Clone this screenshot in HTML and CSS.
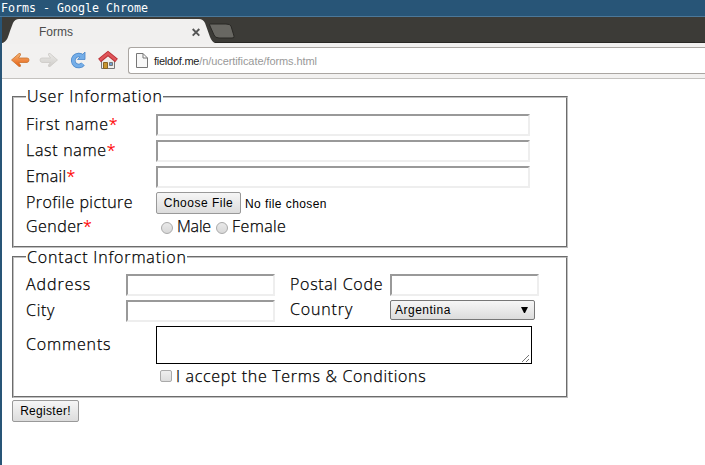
FILE: index.html
```
<!DOCTYPE html>
<html lang="en">
<head>
<meta charset="utf-8">
<title>Forms</title>
<link rel="stylesheet" href="styles.css">
</head>
<body>
<div class="titlebar">Forms - Google Chrome</div>
<div class="window">
  <div class="tabs">
    <svg class="tab-art" width="260" height="27" viewBox="0 0 260 27">
      <path d="M0 26C5 25 6 20 8 14L11 6Q13 2 17 2H197Q201 2 203 6L208 20Q210 25 213 26V27H0Z" fill="#f1f0ef"/>
      <path d="M208 7H224Q228 7 229 9L232 19Q233 21 230 21H217Q213 21 212 18L208 9Q207 7 208 7Z" fill="#686762" stroke="#292825"/>
      <path d="M190.700 12l6.600 6.600M197.300 12l-6.600 6.600" stroke="#555" stroke-width="1.900"/>
    </svg>
    <span class="tab-title">Forms</span>
  </div>
  <div class="toolbar">
    <svg class="nav-icons" width="122" height="34" viewBox="0 0 122 34">
      <defs>
        <linearGradient id="o" x2="0" y2="1"><stop stop-color="#f8b878"/><stop offset="1" stop-color="#e45c10"/></linearGradient>
        <linearGradient id="g" x2="0" y2="1"><stop stop-color="#eae9e6"/><stop offset="1" stop-color="#cfcdca"/></linearGradient>
      </defs>
      <path d="M9.500 17L17 10.500Q19 10 18.500 12L16.500 15H25Q27 15 27 17T25 19.500H16.500L18.500 22Q19 24 17 23.500Z" fill="url(#o)" stroke="#c9722f" stroke-width=".8"/>
      <path d="M55.500 17L48 10.500Q46 10 46.500 12L48.500 15H40Q38 15 38 17T40 19.500H48.500L46.500 22Q46 24 48 23.500Z" fill="url(#g)" stroke="#cbc9c5" stroke-width=".8"/>
      <path d="M80.500 13.500A5.500 5.500 0 1 0 81 21" fill="none" stroke="#4b87c8" stroke-width="4.600"/>
      <path d="M83 9V16.500H75.500Z" fill="#75aee8" stroke="#4b87c8" stroke-width=".8"/>
      <path d="M80.500 13.500A5.500 5.500 0 1 0 81 21" fill="none" stroke="#75aee8" stroke-width="3.200"/>
      <path d="M99.500 16V25.500H112.500V16L106 11Z" fill="#eeeeec" stroke="#777" />
      <path d="M97.500 17.500L106 10.500L114.500 17.500" fill="none" stroke="#b92f35" stroke-width="4.400"/>
      <path d="M98 17L106 10.500L114 17" fill="none" stroke="#df5559" stroke-width="2.600"/>
      <path d="M101.500 19.500h4v6h-4z" fill="#c99631" stroke="#886523"/>
      <path d="M107.500 19.500h3v3h-3z" fill="#729fcf" stroke="#777"/>
    </svg>
    <div class="address">
      <svg width="12" height="15" viewBox="0 0 12 15"><path d="M.5.5H7L11.500 5V14.500H.5ZM7 .5V5H11.500" fill="#f8f8f8" stroke="#777"/></svg>
      <span class="url"><span class="host">fieldof.me</span>/n/ucertificate/forms.html</span>
    </div>
  </div>
  <form class="page">
    <fieldset class="user">
      <legend class="l1">User Information</legend>
      <div class="row"><label class="w1 t-first">First name<b>*</b></label><input class="wide" type="text"></div>
      <div class="row"><label class="w1 t-last">Last name<b>*</b></label><input class="wide" type="text"></div>
      <div class="row"><label class="w1 t-email">Email<b>*</b></label><input class="wide" type="text"></div>
      <div class="row"><label class="w1 t-pic">Profile picture</label><button class="btn choose" type="button">Choose File</button><span class="nofile">No file chosen</span></div>
      <div class="row gender"><label class="w1 t-gender">Gender<b>*</b></label><i class="radio"></i><span class="male">Male</span><i class="radio second"></i><span class="female">Female</span></div>
    </fieldset>
    <fieldset class="contact">
      <legend class="l2">Contact Information</legend>
      <div class="row"><label class="w2 t-address">Address</label><input class="short" type="text"><label class="w3">Postal Code</label><input class="short" type="text"></div>
      <div class="row"><label class="w2">City</label><input class="short" type="text"><label class="w3 country">Country</label><div class="select"><span>Argentina</span><svg width="7" height="6" viewBox="0 0 7 6"><path d="M0 0H7L4 6H3Z"/></svg></div></div>
      <div class="row comments"><label class="w1 t-comments">Comments</label><div class="area"><svg width="8" height="8" viewBox="0 0 8 8"><path d="M0 8L7 1M4 8L7 5" stroke="#666" stroke-width=".9"/></svg></div></div>
      <div class="row accept"><i class="check"></i><span class="terms">I accept the Terms &amp; Conditions</span></div>
    </fieldset>
    <button class="btn register" type="button">Register!</button>
  </form>
</div>
</body>
</html>
```
FILE: styles.css
```
* { box-sizing: border-box; }
body { margin: 0; height: 465px; overflow: hidden; background: #285577; font-family: "Open Sans", sans-serif; }
.titlebar { height: 17px; border-bottom: 1px solid #4c7899; color: #fff; font: 11.63px/16px "DejaVu Sans Mono", monospace; padding-left: 1px; white-space: pre; }
.window { margin-left: 2px; height: 448px; background: #fff; }
.tabs { position: relative; height: 26px; background: #3c3b37; border-bottom: 1px solid #292825; }
.tab-art { display: block; position: absolute; left: 0; top: 0; }
.tab-title { position: absolute; left: 37px; top: 7px; font: 12px/16px "Liberation Sans", sans-serif; color: #4c4c4c; letter-spacing: 0; }
.toolbar { display: flex; height: 36px; background: #f2f1f0; border-bottom: 1px solid #c4c2bf; }
.nav-icons { width: 122px; flex: none; }
.address { display: flex; align-items: center; flex: 1; height: 27px; margin: 4px 0 0 4px; padding-left: 7px; border: 1px solid #aaa6a2; border-right: 0; border-radius: 3px 0 0 3px; background: #fff; }
.url { margin-left: 6px; font: 11px/16px "Liberation Sans", sans-serif; color: #999; white-space: nowrap; letter-spacing: -.08px; }
.host { color: #222; letter-spacing: -.25px; }
.page { display: block; padding: 8px 0 0 10px; }
fieldset { position: relative; margin: 0; padding: 7px 0 0 12px; width: 556px; border: 2px groove #c0c0c0; min-width: 0; }
.user { height: 161px; }
.contact { height: 151px; margin-top: -1px; }
legend { padding: 0 0 2px 1px; height: 20px; line-height: 18px; white-space: nowrap; letter-spacing: .83px; }
.l2 { padding-bottom: 0; line-height: 20px; }
legend, label, .row span { font-size: 16px; font-weight: 300; color: #000; }
legend, label, .male, .female, .terms { -webkit-text-stroke: .25px; }
.row { display: flex; height: 22px; margin-bottom: 4px; align-items: center; white-space: nowrap; }
label { height: 22px; line-height: 20px; flex: none; letter-spacing: .7px; }
label b { color: #f00; font-weight: 300; }
.t-email { letter-spacing: .35px; }
.t-pic { letter-spacing: .43px; }
.t-gender { letter-spacing: .45px; }
.t-address { letter-spacing: .95px; }
.t-comments { letter-spacing: .85px; }
.country { letter-spacing: .85px; line-height: 18px; }
.w1 { width: 130px; }
.w2 { width: 100px; }
.w3 { width: 100px; margin-left: 15px; }
input { height: 22px; margin: 0; padding: 0; border: 2px solid; border-color: #999 #eee #eee #999; background: #fff; }
.wide { width: 374px; }
.short { width: 149px; }
.btn { height: 22px; padding: 0; border: 1px solid #999; border-radius: 2px; background: linear-gradient(#f6f6f6, #dcdcdc); color: #000; font: 12px/20px "Liberation Sans", sans-serif; letter-spacing: .3px; white-space: nowrap; }
.choose { width: 85px; letter-spacing: .5px; }
.row .nofile { margin: 1px 0 0 4px; font: 12px/20px "Liberation Sans", sans-serif; letter-spacing: .42px; }
.gender { height: 18px; }
.radio { width: 12px; height: 12px; margin: 2px 4px 0 5px; border: 1px solid #aaa; border-radius: 50%; background: linear-gradient(#e9e9e9, #d8d8d8); }
.radio.second { margin-left: 5px; }
.male { width: 34px; margin-top: -2px; letter-spacing: -.2px; }
.female { margin-top: -2px; letter-spacing: .4px; }
.select { display: flex; align-items: center; justify-content: space-between; align-self: flex-start; width: 145px; height: 20px; padding: 0 6px 0 4px; border: 1px solid #777; border-radius: 2px; background: linear-gradient(#f6f6f6, #dcdcdc); }
.row .select span { font: 12px/18px "Liberation Sans", sans-serif; letter-spacing: .5px; }
.comments { height: 38px; margin-bottom: 2px; }
.area { display: flex; align-items: flex-end; justify-content: flex-end; width: 376px; height: 38px; padding: 1px; border: 1px solid #000; }
.accept { height: 20px; margin-top: 0; padding-left: 134px; }
.check { width: 12px; height: 12px; margin: 0 4px 0 0; border: 1px solid #aaa; border-radius: 2px; background: linear-gradient(#eee, #ddd); }
.terms { letter-spacing: .68px; margin-top: 0; }
.register { display: block; width: 67px; margin-top: 2px; }
```
